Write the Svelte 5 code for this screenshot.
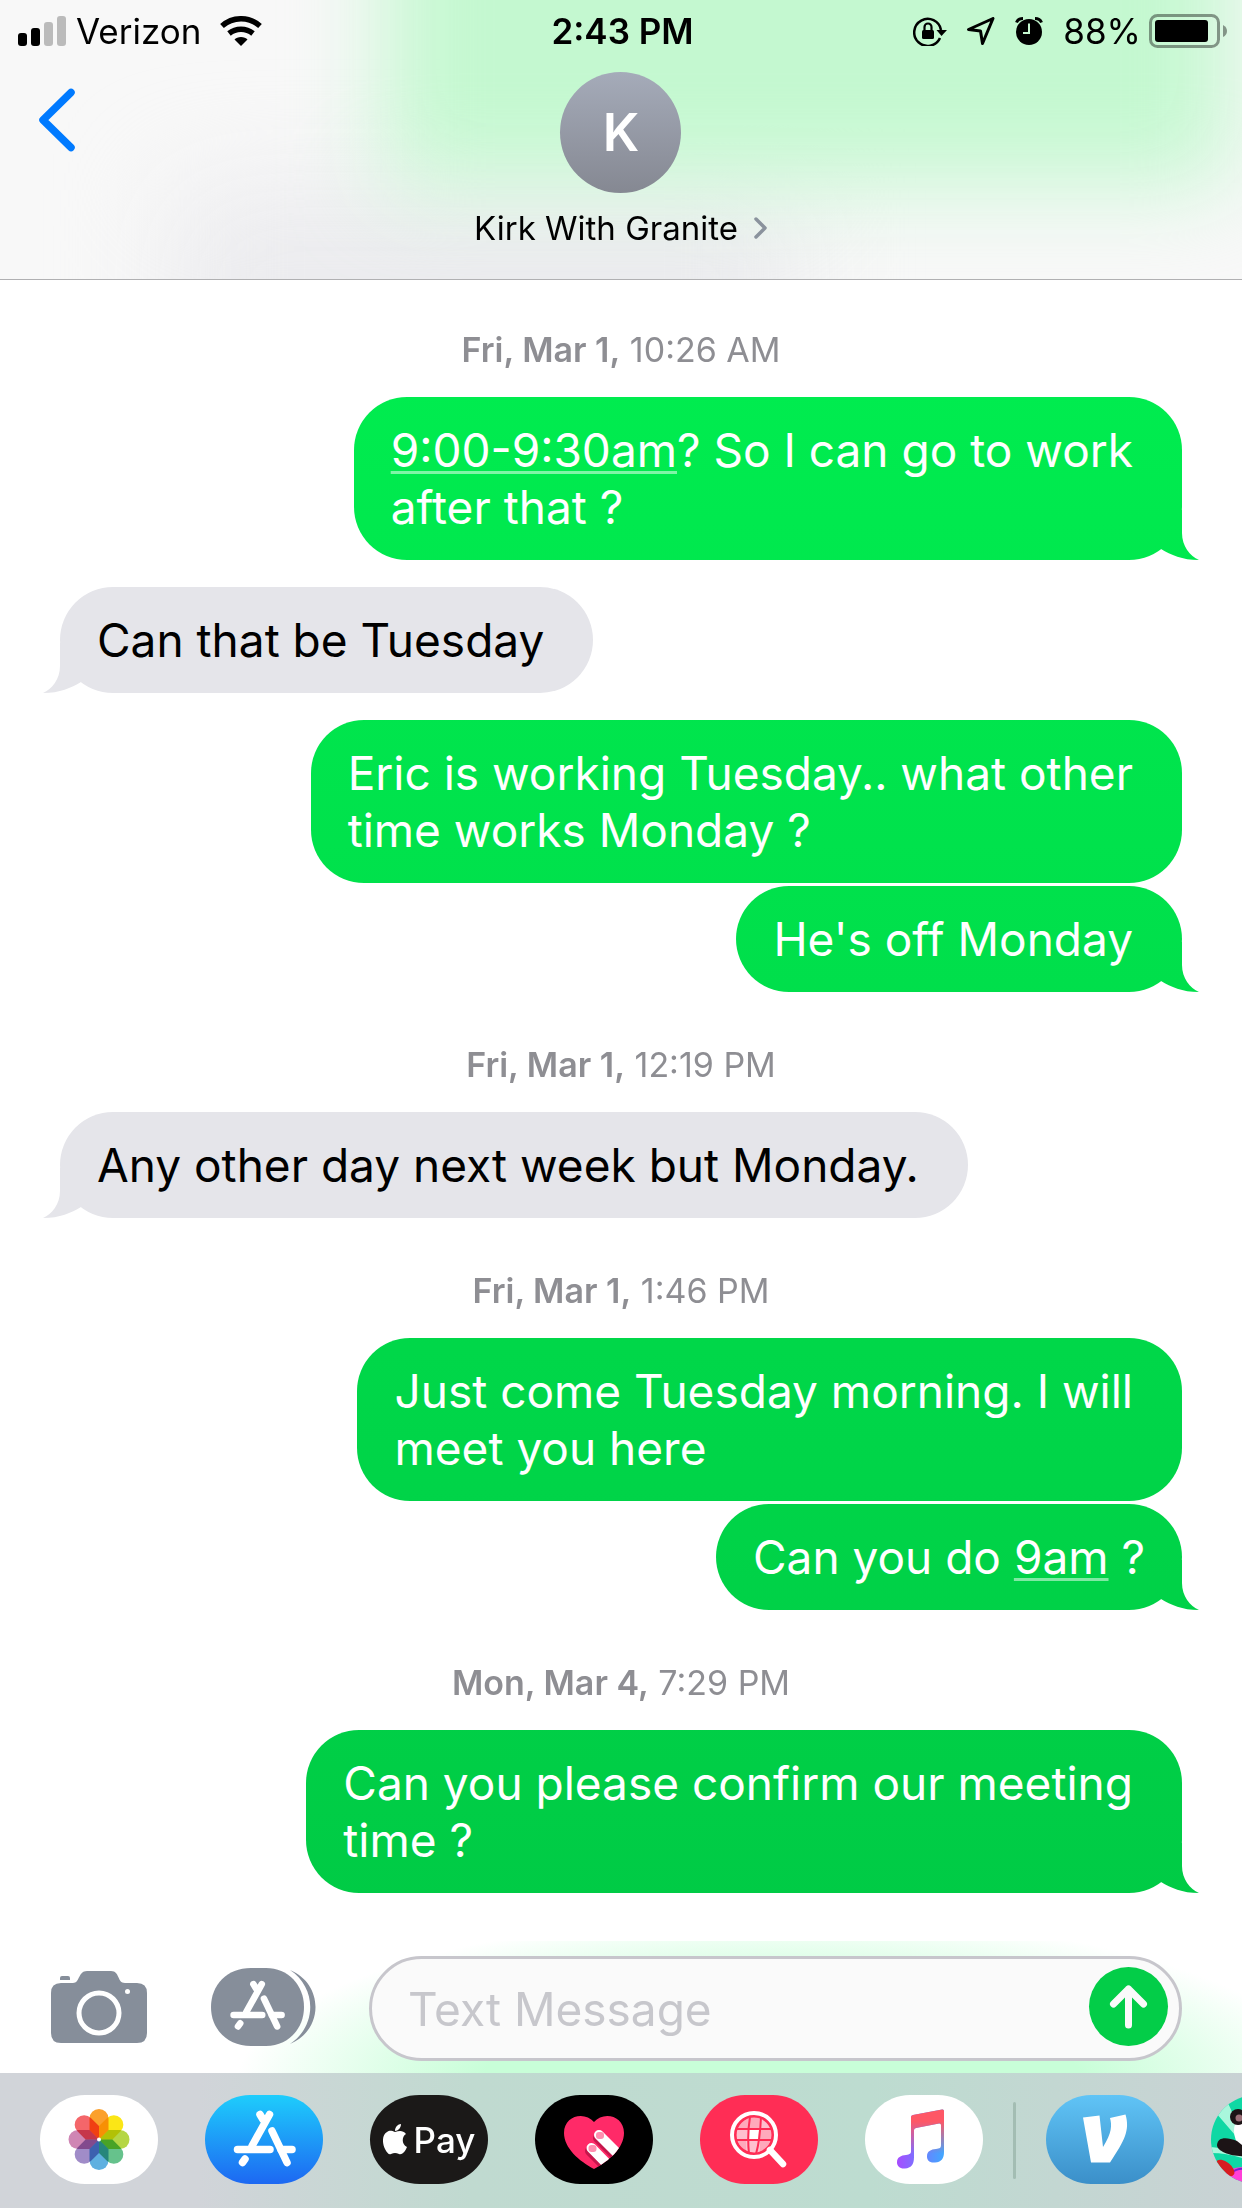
<script>
  const items = [
    { kind: 'stamp', day: 'Fri, Mar 1,', time: '10:26 AM' },
    { kind: 'out', tail: true, lines: [[{ event: '9:00-9:30am' }, '? So I can go to work'], ['after that ?']] },
    { kind: 'in', tail: true, lines: [['Can that be Tuesday']] },
    { kind: 'out', lines: [['Eric is working Tuesday.. what other'], ['time works Monday ?']] },
    { kind: 'out', tail: true, joined: true, lines: [["He's off Monday"]] },
    { kind: 'stamp', day: 'Fri, Mar 1,', time: '12:19 PM' },
    { kind: 'in', tail: true, lines: [['Any other day next week but Monday.']] },
    { kind: 'stamp', day: 'Fri, Mar 1,', time: '1:46 PM' },
    { kind: 'out', lines: [['Just come Tuesday morning. I will'], ['meet you here']] },
    { kind: 'out', tail: true, joined: true, snug: true, lines: [['Can you do ', { event: '9am' }, ' ?']] },
    { kind: 'stamp', day: 'Mon, Mar 4,', time: '7:29 PM' },
    { kind: 'out', tail: true, lines: [['Can you please confirm our meeting'], ['time ?']] },
  ];
  const pill = 'M45 0H73C98 0 118 20 118 44.5S98 89 73 89H45C20 89 0 69 0 44.5S20 0 45 0Z';
  const petals = [
    [0, '#fba02c'], [45, '#fbe616'], [90, '#b5d645'], [135, '#66c28c'],
    [180, '#5fb0e0'], [225, '#a08cc8'], [270, '#cf86b4'], [315, '#f4666a'],
  ];
</script>

{#snippet appMark()}
  <g fill="none" stroke="currentColor" stroke-width="7.5" stroke-linecap="round">
    <path d="M55 19.500L58 24.500M64.500 19.500L47 51" />
    <path d="M32.500 54.500H65" />
    <path d="M76 54.500H87" />
    <path d="M40 64L37.500 67.500" />
    <path d="M67 36L82 67.500" />
  </g>
{/snippet}

<div class="phone">
  <header>
    <div class="status">
      <div class="carrier">
        <svg width="49" height="30" viewBox="0 0 49 30" aria-hidden="true">
          <rect x="0" y="17" width="9" height="13" rx="3" /><rect x="13" y="12" width="9" height="18" rx="3" />
          <rect x="26" y="6" width="9" height="24" rx="3" fill="#bbb" /><rect x="39" y="0" width="9" height="30" rx="3" fill="#bbb" />
        </svg>
        <span>Verizon</span>
        <svg class="wifi" width="42" height="30" viewBox="0 0 42 30" aria-hidden="true">
          <path d="M21 30L14.500 23.500C17 20 25 20 27.500 23.500Z" />
          <path d="M2 10A28.500 28.500 0 0 1 40 10M9 17.500A19 19 0 0 1 33 17.500" fill="none" stroke="#000" stroke-width="5.500" />
        </svg>
      </div>
      <time>2:43 PM</time>
      <div class="indicators">
        <svg width="34" height="30" viewBox="0 0 34 30" aria-hidden="true">
          <path d="M27 22A13.500 13.500 0 1 1 28 14" fill="none" stroke="#000" stroke-width="2.500" />
          <path d="M23.500 14H34L28.500 20Z" /><rect x="9" y="14" width="12" height="9" rx="1.500" />
          <path d="M11.500 15V11a3.500 3.500 0 0 1 7 0V15" fill="none" stroke="#000" stroke-width="2.200" />
        </svg>
        <svg width="28" height="28" viewBox="0 0 28 28" aria-hidden="true"><path d="M1.500 12.500L26 1.500 15.500 26.500 13.500 14Z" fill="none" stroke="#000" stroke-width="3" stroke-linejoin="round" /></svg>
        <svg width="28" height="28" viewBox="0 0 28 28" aria-hidden="true">
          <circle cx="14" cy="15" r="13" /><path d="M1.500 5.500Q3 1.500 8 1.500M26.500 5.500Q25 1.500 20 1.500" fill="none" stroke="#000" stroke-width="3" />
          <path d="M14 6.500V16H8" fill="none" stroke="#c6f8d0" stroke-width="2" />
        </svg>
        <span>88%</span>
        <svg class="battery" width="78" height="34" viewBox="0 0 78 34" aria-hidden="true">
          <rect x="1.500" y="1.500" width="68" height="31" rx="7" fill="none" stroke="#000" stroke-opacity=".4" stroke-width="3" />
          <rect x="6" y="6" width="53" height="22" rx="3" /><path d="M74 11q4 2 4 6t-4 6z" fill-opacity=".4" />
        </svg>
      </div>
    </div>
    <div class="nav">
      <button class="back" aria-label="Back"><svg width="38" height="64" viewBox="0 0 38 64"><path d="M33 4.500L5 32 33 59.500" fill="none" stroke="#007aff" stroke-width="7.500" stroke-linecap="round" stroke-linejoin="round" /></svg></button>
      <button class="contact">
        <span class="avatar">K</span>
        <span class="name">Kirk With Granite <svg width="14" height="22" viewBox="0 0 14 22"><path d="M2 2l9 9-9 9" fill="none" stroke="#8a929d" stroke-width="3.500" stroke-linecap="round" stroke-linejoin="round" /></svg></span>
      </button>
    </div>
  </header>

  <main>
    {#each items as m}
      {#if m.kind === 'stamp'}
        <p class="stamp"><b>{m.day}</b> {m.time}</p>
      {:else}
        <p class="bubble {m.kind}" class:tail={m.tail} class:joined={m.joined} class:snug={m.snug}>{#each m.lines as line}<span class="line">{#each line as part}{#if part.event}<a href="#event">{part.event}</a>{:else}{part}{/if}{/each}</span>{/each}</p>
      {/if}
    {/each}
  </main>

  <footer>
    <form class="compose" onsubmit={(e) => e.preventDefault()}>
      <button type="button" class="tool" aria-label="Camera">
        <svg width="96" height="72" viewBox="0 0 96 72">
          <path fill="#868e9a" d="M9 9V7Q9 5 11 5H17Q19 5 19 7V9ZM10 12H22C29 12 27 0 36 0H60C69 0 66 12 74 12H86Q96 12 96 22V62Q96 72 86 72H10Q0 72 0 62V22Q0 12 10 12Z" />
          <circle cx="48" cy="42" r="20" fill="none" stroke="#fff" stroke-width="5" /><circle cx="76.500" cy="20.500" r="2.500" fill="#fff" />
        </svg>
      </button>
      <button type="button" class="tool apps" aria-label="Apps">
        <svg width="105" height="78" viewBox="0 0 105 78">
          <path fill="#868e9a" d="M40 0H55C77 0 93 17 93 39S77 78 55 78H40C16 78 0 61 0 39S16 0 40 0Z" />
          <path fill="#868e9a" d="M79 2C113 16 113 62 79 76C106 58 106 20 79 2Z" />
          <g color="#fff" transform="translate(-6 -1) scale(.88)">{@render appMark()}</g>
        </svg>
      </button>
      <div class="field">
        <input type="text" placeholder="Text Message" aria-label="Text Message" />
        <button class="send" aria-label="Send"><svg width="79" height="79" viewBox="0 0 79 79"><path d="M39.500 58V22M24.500 37L39.500 22 54.500 37" fill="none" stroke="#fafafa" stroke-width="7" stroke-linecap="round" stroke-linejoin="round" /></svg></button>
      </div>
    </form>
    <nav class="dock" aria-label="Message apps">
      <button aria-label="Photos"><svg width="118" height="89" viewBox="0 0 118 89"><path d={pill} fill="#fff" />
        <g class="petals">{#each petals as [a, c]}<path d="M49.500 23.500a9.500 9.500 0 0 1 19 0V35L59 44.500L49.500 35Z" fill={c} transform="rotate({a} 59 44.500)" />{/each}</g>
        <circle cx="59" cy="44.500" r="2" fill="#fff" /></svg></button>
      <button aria-label="App Store"><svg width="118" height="89" viewBox="0 0 118 89">
        <defs><linearGradient id="store" x2="0" y2="1"><stop stop-color="#1ecdfc" /><stop offset="1" stop-color="#1d68f2" /></linearGradient></defs>
        <path d={pill} fill="url(#store)" /><g color="#fff">{@render appMark()}</g></svg></button>
      <button class="pay" aria-label="Apple Pay">
        <svg width="25" height="31" viewBox="0 0 25 31"><path fill="#fff" d="M12 8C8 6 6 6.500 4 8C-1 11-1 19 2 25C4 29 6 31 8 30C11 28.500 13 28.500 16 30C19 31 22 28 24 23C18 20 19 12 23 10C20 6.500 17 6.500 12 8ZM12 7C12 3 15 0 18 0C18 4 15 7 12 7Z" /></svg><span>Pay</span></button>
      <button aria-label="Digital Touch"><svg width="118" height="89" viewBox="0 0 118 89"><path d={pill} />
        <clipPath id="heart"><path d="M59 74C44 66 29 53 29 38C29 20 50 16 59 27C68 16 89 20 89 38C89 53 74 66 59 74Z" /></clipPath>
        <g clip-path="url(#heart)"><path d="M0 0H118V89H0Z" fill="#ff2a68" />
          <g stroke-linecap="round" stroke-width="10"><path d="M63 43L88 68M55 56L80 81" stroke="#c5164c" /><path d="M64 40L90 66M56.500 53L80 77" stroke="#fff" /></g>
          <g fill="#ff8fb0"><rect x="61" y="37" width="8" height="7" rx="3" /><rect x="53.500" y="50" width="8" height="7" rx="3" /></g></g></svg></button>
      <button aria-label="Images"><svg width="118" height="89" viewBox="0 0 118 89"><path d={pill} fill="#ff2d55" />
        <circle cx="54" cy="40" r="18" fill="#ffa9bb" /><path d="M37 33h11l-1 11H37zM60 22h10v12H60zM46 46h14v12H46z" fill="#ffd0da" opacity=".6" /><path d="M49 34h10l-1 10h-10z" fill="#fff" />
        <path d="M50 22Q47 40 49 59M61 22Q60 45 56 59M36 34H72M36 45H72" fill="none" stroke="#ff2d55" stroke-width="2" />
        <circle cx="54" cy="40" r="19" fill="none" stroke="#ff2d55" stroke-width="3" /><circle cx="54" cy="40" r="22" fill="none" stroke="#fff" stroke-width="4" />
        <path d="M70 55L83 69" stroke="#fff" stroke-width="6.500" stroke-linecap="round" /></svg></button>
      <button aria-label="Music"><svg width="118" height="89" viewBox="0 0 118 89"><path d={pill} fill="#fff" />
        <defs><linearGradient id="tune" x2="1"><stop stop-color="#a74cff" /><stop offset=".4" stop-color="#7b72ff" /><stop offset="1" stop-color="#40a8ff" /></linearGradient>
        <linearGradient id="fade" x2="0" y2="1"><stop offset=".2" stop-color="#fe5766" /><stop offset=".75" stop-color="#fe5766" stop-opacity="0" /></linearGradient></defs>
        {#each ['url(#tune)', 'url(#fade)'] as paint}
          <path fill={paint} d="M46 22Q46 20.500 48 20L77 14.500Q79 14 79 16V57C79 64 76 67 70 67.500C64 68 62 65 62 61.500C62 56 66 54.500 71 54C75 53.500 76 53 76 50V30Q76 28 74 28.500L51 33Q49 33.500 49 35V62C49 70 46 73 40 73.500C35 74 32 71 32 67.500C32 62 36 60.500 41 60C45 59 46 59 46 56Z" />
        {/each}</svg></button>
      <span class="divider"></span>
      <button aria-label="Venmo"><svg width="118" height="89" viewBox="0 0 118 89">
        <defs><linearGradient id="venmo" x2="0" y2="1"><stop stop-color="#60c4f6" /><stop offset="1" stop-color="#3b8fc9" /></linearGradient></defs>
        <path d={pill} fill="url(#venmo)" /><path fill="#fff" d="M37 22.500L53.500 20.500L57 52C66 38 66 30 64 23L79.500 19.500C84 35 79 45 64 67.500H45Z" /></svg></button>
      <button aria-label="Panda Pop"><svg width="118" height="89" viewBox="0 0 118 89">
        <clipPath id="edge"><path d={pill} /></clipPath>
        <g clip-path="url(#edge)"><path d="M0 0H118V89H0Z" fill="#0fd8a4" /><path d="M5 18L24 40 30 36 16 6ZM0 58C16 58 30 62 50 70V58L0 52Z" fill="#a9f7dc" />
          <ellipse cx="34" cy="80" rx="20" ry="8" fill="#ff3fd8" /><path d="M20 78Q30 70 42 77" fill="none" stroke="#7a1fd0" stroke-width="2" /><ellipse cx="14" cy="73" rx="11" ry="6" fill="#d81c20" transform="rotate(38 14 73)" />
          <ellipse cx="45" cy="36" rx="22" ry="23" fill="#fff" /><path d="M6 50C7 42 15 42 26 46L44 60C28 64 6 58 6 50Z" fill="#1c1416" /><circle cx="27" cy="22" r="8" fill="#1c1416" /><circle cx="28" cy="23" r="3.500" fill="#9b6f78" /></g></svg></button>
    </nav>
  </footer>
</div>

<style>
  :global(body) { background: #fff; }
  * { box-sizing: border-box; }
  .phone { min-height: 100vh; display: flex; flex-direction: column; font-family: Inter, "Liberation Sans", sans-serif; color: #000; overflow: hidden; }
  button { border: 0; padding: 0; background: none; color: inherit; font: inherit; }
  svg { display: block; flex: none; }

  header { position: relative; height: 280px; background: #f8f8f8; border-bottom: 1px solid #b0b0b2; overflow: hidden; }
  header::before, header::after { content: ""; position: absolute; }
  header::before { inset: 190px 36% -120px 14%; background: #ebebee; filter: blur(55px); }
  header::after { inset: -240px 1% 96px 31%; background: #c4f8d0; filter: blur(46px); }
  .status, .nav { position: relative; z-index: 1; }
  .status { display: grid; grid-template-columns: 1fr auto 1fr; align-items: center; height: 61px; padding: 0 15px 0 18px; font-size: 35px; }
  .carrier, .indicators { display: flex; align-items: center; }
  .carrier { gap: 9px; }
  .wifi { margin-left: 10px; }
  .status time { font-weight: 600; }
  .indicators { justify-content: flex-end; gap: 20px; }
  .battery { margin-left: -12px; }
  .nav { display: flex; justify-content: center; }
  .back { position: absolute; left: 38px; top: 27px; }
  .contact { display: flex; flex-direction: column; align-items: center; padding-top: 11px; gap: 13px; }
  .avatar { width: 121px; height: 121px; border-radius: 50%; background: linear-gradient(#a5abb9, #858892); color: #fff; font-size: 52px; font-weight: 600; line-height: 121px; }
  .name { display: flex; align-items: center; gap: 16px; font-size: 33px; line-height: 44px; }

  main { flex: 1; display: flex; flex-direction: column; padding: 0 60px 48px; }
  .stamp { margin: 0; height: 120px; line-height: 44px; padding-top: 51px; text-align: center; color: #8e8e93; font-size: 34px; }
  .stamp:first-child { height: 117px; padding-top: 48px; }
  .stamp b { font-weight: 600; }
  .bubble { position: relative; max-width: 930px; margin: 0; padding: 25px 49px 24px 37px; border-radius: 53px; font-size: 46px; line-height: 57px; white-space: pre-wrap; }
  .line { display: block; }
  .bubble.snug { padding-right: 37px; }
  .bubble a { color: inherit; text-decoration: underline 3px rgb(255 255 255 / .5); text-underline-offset: 4px; text-decoration-skip-ink: none; }
  .out, .out.tail::after { background: linear-gradient(#00f050 200px, #00ca45 1950px) fixed; }
  .out { align-self: flex-end; color: #fff; }
  .in, .in.tail::after { background: #e5e5ea; }
  .in { align-self: flex-start; }
  .bubble + .bubble { margin-top: 27px; }
  .bubble + .joined { margin-top: 3px; }
  .tail::after { content: ""; position: absolute; bottom: 0; width: 60px; height: 50px; }
  .out.tail::after { right: -18px; clip-path: path("M42 0V23C42 36 50 46 59 50C42 50 31 45 21 39L14 30V0Z"); }
  .in.tail::after { left: -18px; clip-path: path("M18 0V23C18 36 10 46 1 50C18 50 29 45 39 39L46 30V0Z"); }

  .compose { display: flex; align-items: center; height: 132px; padding: 15px 60px 12px 51px; background: radial-gradient(44% 130% at 63% 110%, #c8fed8 0 55%, #fff0 100%), #fff; }
  .tool { margin-bottom: 4px; }
  .apps { margin-left: 64px; }
  .field { flex: 1; min-width: 0; display: flex; align-items: center; height: 105px; margin-left: 53px; padding: 0 11px 0 36px; border: 3px solid #c7c6cc; border-radius: 53px; background: #fafafa; }
  input { flex: 1; min-width: 0; border: 0; outline: 0; padding: 0; background: none; font: inherit; font-size: 46px; }
  input::placeholder { color: #c7c7cc; opacity: 1; }
  .send { width: 79px; height: 79px; margin-bottom: 4px; border-radius: 50%; background: #03cd48; }
  .dock { display: flex; height: 135px; padding: 22px 0 24px 40px; gap: 47px; background: linear-gradient(90deg, #d1d4d9 16%, #c0dad0 38%, #bddcd0 70%, #c9d2d4 100%); overflow: hidden; }
  .dock > * { flex: none; }
  .pay { display: flex; align-items: center; justify-content: center; gap: 6px; width: 118px; height: 89px; border-radius: 50px / 45px; background: #1b1918; color: #fff; font-size: 35px; font-weight: 500; }
  .petals path { mix-blend-mode: multiply; }
  .petals { isolation: isolate; }
  .divider { width: 3px; height: 77px; margin: 7px -17px 0; border-radius: 2px; background: #a3bdb3; }
</style>
